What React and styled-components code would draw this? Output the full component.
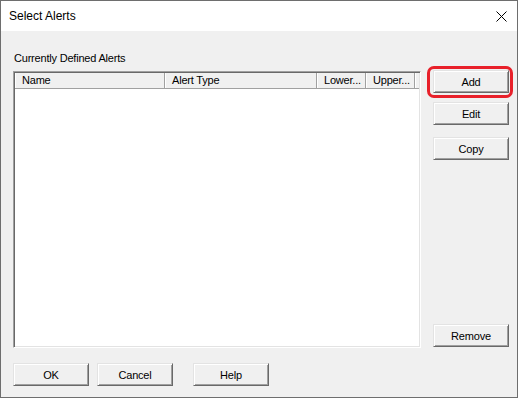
import React from 'react';
import styled, { createGlobalStyle } from 'styled-components';

const GlobalStyle = createGlobalStyle`
  html, body {
    margin: 0;
    padding: 0;
    background: #ffffff;
  }
  * {
    box-sizing: border-box;
  }
`;

const Window = styled.div`
  width: 518px;
  height: 398px;
  border: 1px solid #6e6e6e;
  display: flex;
  flex-direction: column;
  background: #f0f0f0;
  font-family: 'Liberation Sans', Arial, sans-serif;
  font-size: 11px;
  letter-spacing: -0.2px;
  color: #000;
`;

const TitleBar = styled.div`
  height: 30px;
  background: #ffffff;
  display: flex;
  align-items: center;
  justify-content: space-between;
  padding-left: 8px;
  padding-right: 10px;
`;

const Title = styled.span`
  font-size: 12px;
  letter-spacing: 0;
  color: #000;
`;

const CloseIcon = styled.svg`
  width: 11px;
  height: 11px;
`;

const Client = styled.div`
  flex: 1;
  display: flex;
  flex-direction: column;
  padding: 21px 12px 0 12px;
`;

const Label = styled.div`
  line-height: 13px;
  height: 13px;
  margin-bottom: 6px;
  padding-left: 1px;
`;

const MainRow = styled.div`
  display: flex;
  gap: 12px;
  height: 277px;
`;

const ListBox = styled.div`
  width: 408px;
  height: 277px;
  background: #ffffff;
  border-top: 1px solid #a0a0a0;
  border-left: 1px solid #a0a0a0;
  border-right: 1px solid #ffffff;
  border-bottom: 1px solid #ffffff;
  box-shadow: inset 1px 1px 0 #696969, inset -1px -1px 0 #e3e3e3;
  padding: 1px;
  display: flex;
  flex-direction: column;
`;

const HeaderRow = styled.div`
  display: flex;
  height: 16px;
  background: #f0f0f0;
  border-bottom: 1px solid #a0a0a0;
`;

const HeaderCell = styled.div`
  width: ${(p) => p.$w}px;
  flex: ${(p) => (p.$fill ? 1 : 'none')};
  padding-left: 6px;
  line-height: 15px;
  border-left: 1px solid #ffffff;
  border-right: ${(p) => (p.$fill ? 'none' : '1px solid #a0a0a0')};
  white-space: nowrap;
  overflow: hidden;
`;

const SideColumn = styled.div`
  width: 76px;
  display: flex;
  flex-direction: column;
  margin-top: -1px;
  margin-bottom: 1px;
`;

const Button = styled.button`
  width: 76px;
  height: 23px;
  flex: none;
  margin-top: ${(p) => p.$mt || 0}px;
  margin-left: ${(p) => p.$ml || 0}px;
  background: #f0f0f0;
  border: none;
  border-top: 1px solid #e3e3e3;
  border-left: 1px solid #e3e3e3;
  border-right: 1px solid #696969;
  border-bottom: 1px solid #696969;
  box-shadow: inset 1px 1px 0 #ffffff, inset -1px -1px 0 #a0a0a0;
  font-family: 'Liberation Sans', Arial, sans-serif;
  font-size: 11px;
  letter-spacing: -0.2px;
  color: #000;
  padding: 0;
  cursor: pointer;
`;

const Spacer = styled.div`
  flex: 1;
`;

const Highlight = styled.div`
  position: relative;
  width: 76px;
  height: 23px;
  flex: none;

  &::after {
    content: '';
    position: absolute;
    left: -6px;
    top: -4px;
    right: -4px;
    bottom: -5px;
    border: 3px solid #e8202a;
    border-radius: 7px;
    pointer-events: none;
  }
`;

const BottomRow = styled.div`
  display: flex;
  margin-top: 15px;
`;

export default function App() {
  return (
    <>
      <GlobalStyle />
      <Window>
        <TitleBar>
          <Title>Select Alerts</Title>
          <CloseIcon viewBox="0 0 11 11">
            <path d="M0.5 0.5 L10.5 10.5 M10.5 0.5 L0.5 10.5" stroke="#000" strokeWidth="1" fill="none" />
          </CloseIcon>
        </TitleBar>
        <Client>
          <Label>Currently Defined Alerts</Label>
          <MainRow>
            <ListBox>
              <HeaderRow>
                <HeaderCell $w={150}>Name</HeaderCell>
                <HeaderCell $w={152}>Alert Type</HeaderCell>
                <HeaderCell $w={49}>Lower...</HeaderCell>
                <HeaderCell $w={49}>Upper...</HeaderCell>
                <HeaderCell $fill />
              </HeaderRow>
            </ListBox>
            <SideColumn>
              <Highlight>
                <Button>Add</Button>
              </Highlight>
              <Button $mt={9}>Edit</Button>
              <Button $mt={12}>Copy</Button>
              <Spacer />
              <Button>Remove</Button>
            </SideColumn>
          </MainRow>
          <BottomRow>
            <Button>OK</Button>
            <Button $ml={8}>Cancel</Button>
            <Button $ml={20}>Help</Button>
          </BottomRow>
        </Client>
      </Window>
    </>
  );
}
